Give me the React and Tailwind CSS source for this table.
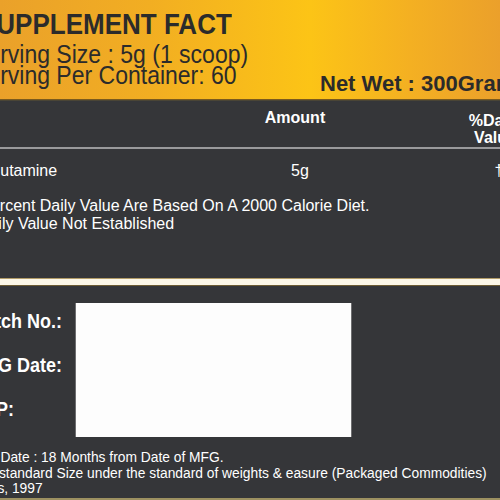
export default function App() {
  return (
    <div
      className="w-[500px] h-[500px] overflow-hidden bg-[#353639] text-white"
      style={{ fontFamily: '"Liberation Sans", Arial, sans-serif' }}
    >
      {/* Gold header */}
      <div className="h-[100px] border-b border-[#7a5a1e] bg-[linear-gradient(90deg,#eaa12a_0%,#f2ae22_30%,#fcc416_62%,#f4b022_82%,#eba02b_100%)] text-[#2b2b2b] overflow-hidden">
        <div className="pt-[9px] ml-[-21px] text-[26px] leading-[30px] font-bold whitespace-nowrap">
          <div className="scale-y-[1.12] origin-left">SUPPLEMENT FACT</div>
        </div>
        <div className="mt-[5px] ml-[-28px] text-[23px] leading-[21px] whitespace-nowrap scale-y-[1.1] origin-left">
          Serving Size : 5g (1 scoop)
        </div>
        <div className="flex items-start whitespace-nowrap">
          <div className="w-[348px] shrink-0 ml-[-28px] text-[23px] leading-[21px] scale-y-[1.1] origin-left">
            Serving Per Container: 60
          </div>
          <div className="mt-[8px] text-[22px] leading-[22px] font-bold">
            Net Wet : 300Grams
          </div>
        </div>
      </div>

      {/* Top dark panel */}
      <div className="h-[178px] border-t border-[#4a4536] overflow-hidden">
        <div className="h-[46px] flex items-start pt-[8px] font-bold text-[16px] whitespace-nowrap">
          <div className="w-[245px] shrink-0" />
          <div className="w-[100px] shrink-0 text-center leading-[17px]">Amount</div>
          <div className="w-[100px] shrink-0 ml-[100px] mt-[3px] text-center leading-[17px]">
            %Daily
            <br />
            Value
          </div>
        </div>
        <div className="h-[2px] bg-[#9a9a9c]" />
        <div className="flex items-start mt-[13px] text-[16px] leading-[18px] whitespace-nowrap">
          <div className="w-[250px] shrink-0">
            <span className="ml-[-30px] inline-block">L-Glutamine</span>
          </div>
          <div className="w-[100px] shrink-0 text-center">5g</div>
          <div className="w-[100px] shrink-0 ml-[99px] text-center">†</div>
        </div>
        <div className="mt-[17px] text-[16px] leading-[18px] whitespace-nowrap">
          <div className="ml-[-26px]">*Percent Daily Value Are Based On A 2000 Calorie Diet.</div>
          <div className="ml-[-31px]">†Daily Value Not Established</div>
        </div>
      </div>

      {/* Cream band */}
      <div className="h-[8px] flex flex-col">
        <div className="h-[1px] bg-[#b29c68]" />
        <div className="h-[6px] bg-[#fcf7e8]" />
        <div className="h-[1px] bg-[#6d5c34]" />
      </div>

      {/* Bottom dark panel */}
      <div className="h-[212px] overflow-hidden">
        <div className="flex items-start">
          <div className="w-[103px] shrink-0 ml-[-28px] pt-[13px] text-[18px] leading-[44px] font-bold whitespace-nowrap">
            <div className="scale-y-[1.14] origin-left">Batch No.:</div>
            <div className="scale-y-[1.14] origin-left">MFG Date:</div>
            <div className="scale-y-[1.14] origin-left">EXP:</div>
          </div>
          <div className="w-[277px] h-[134px] shrink-0 mt-[17px] bg-[#fdfdfd] border-x border-[#6e6e70]" />
        </div>
        <div className="mt-[13px] ml-[-31px] text-[13.8px] leading-[15.5px] whitespace-nowrap">
          <div>Exp. Date : 18 Months from Date of MFG.</div>
          <div>Non-standard Size under the standard of weights &amp; easure (Packaged Commodities)</div>
          <div>Rules, 1997</div>
        </div>
      </div>

      {/* Bottom gold line */}
      <div className="h-[2px] bg-[#9d9161]" />
    </div>
  );
}
